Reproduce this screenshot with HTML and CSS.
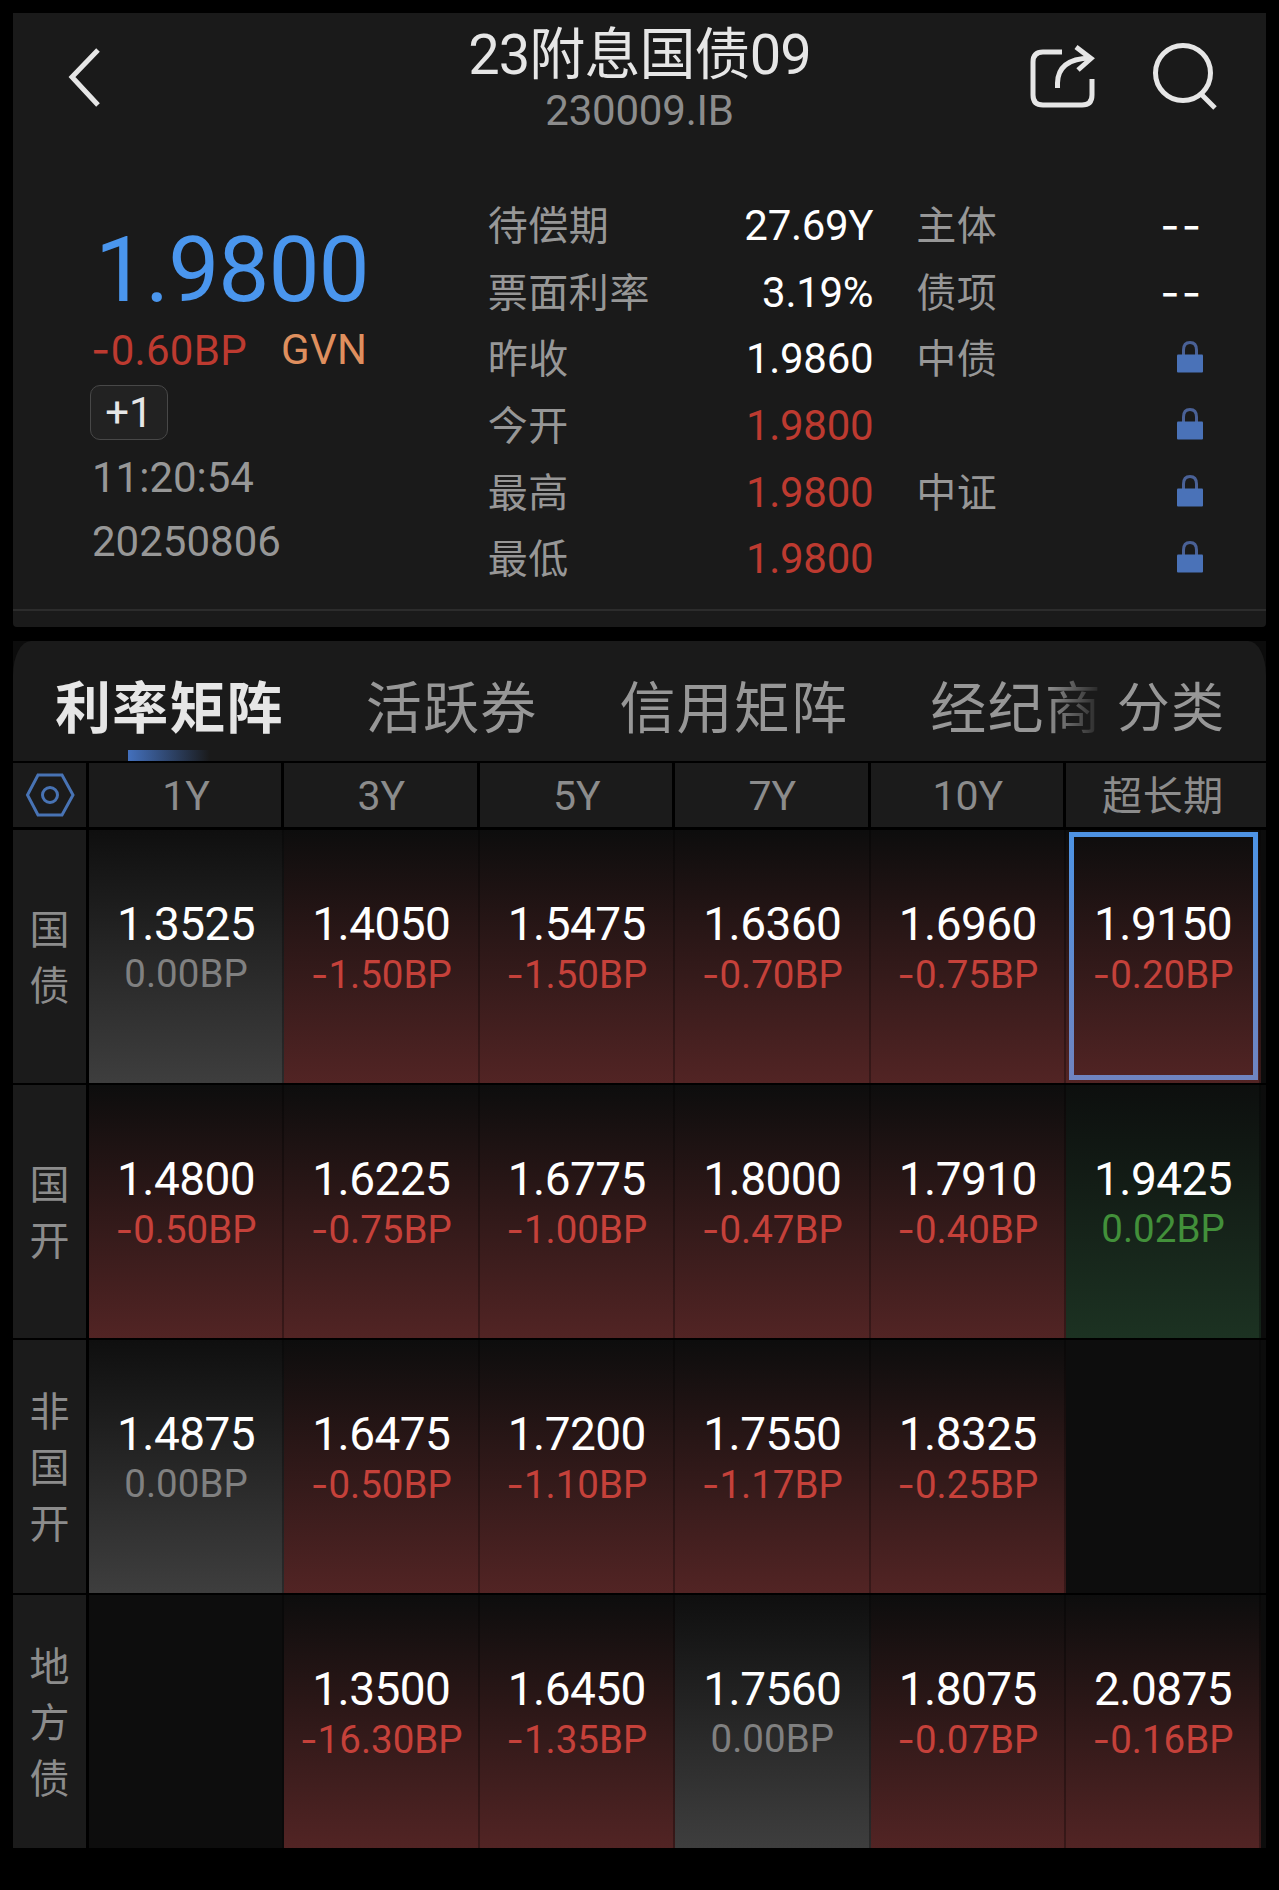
FILE: index.html
```html
<!DOCTYPE html>
<html lang="zh-CN">
<head>
    <meta charset="UTF-8">
    <meta name="viewport" content="width=device-width, initial-scale=1.0">
    <title>23附息国债09</title>
    <link rel="stylesheet" href="styles.css">
</head>
<body>
    <section class="quote">
        <header class="topbar">
            <svg class="back" width="40" height="64" viewBox="0 0 40 64"><path d="M32 5 L6 32 L32 60"/></svg>
            <div class="heading">
                <h1>23附息国债09</h1>
                <p>230009.IB</p>
            </div>
            <div class="actions">
                <svg width="70" height="70" viewBox="0 0 70 70">
                    <path d="M34 10 H15 Q5 10 5 20 V53 Q5 63 15 63 H54 Q64 63 64 53 V37"/>
                    <path d="M29.500 46 V41 Q30 17 62 16"/>
                    <path d="M48 5 L63 16.500 L50 28"/>
                </svg>
                <svg width="70" height="70" viewBox="0 0 70 70">
                    <circle cx="33" cy="31" r="27.500"/>
                    <path d="M51 52 L65 66"/>
                </svg>
            </div>
        </header>

        <div class="summary">
            <div class="price">
                <div class="last">1.9800</div>
                <div class="change"><span class="red"><i>-</i>0.60BP</span><span class="source">GVN</span></div>
                <div class="badge">+1</div>
                <div class="time">11:20:54</div>
                <div class="time">20250806</div>
            </div>
            <dl class="info">
                <dt>待偿期</dt><dd>27.69Y</dd>
                <dt>票面利率</dt><dd>3.19%</dd>
                <dt>昨收</dt><dd>1.9860</dd>
                <dt>今开</dt><dd class="red">1.9800</dd>
                <dt>最高</dt><dd class="red">1.9800</dd>
                <dt>最低</dt><dd class="red">1.9800</dd>
            </dl>
            <dl class="info rating">
                <dt>主体</dt><dd class="none">--</dd>
                <dt>债项</dt><dd class="none">--</dd>
                <dt>中债</dt><dd><svg class="lock" width="26" height="32" viewBox="0 0 26 32"><path d="M6.500 15 V9 Q6.500 1.500 13 1.500 Q19.500 1.500 19.500 9 V15"/><rect y="13.500" width="26" height="18" rx="1"/></svg></dd>
                <dt></dt><dd><svg class="lock" width="26" height="32" viewBox="0 0 26 32"><path d="M6.500 15 V9 Q6.500 1.500 13 1.500 Q19.500 1.500 19.500 9 V15"/><rect y="13.500" width="26" height="18" rx="1"/></svg></dd>
                <dt>中证</dt><dd><svg class="lock" width="26" height="32" viewBox="0 0 26 32"><path d="M6.500 15 V9 Q6.500 1.500 13 1.500 Q19.500 1.500 19.500 9 V15"/><rect y="13.500" width="26" height="18" rx="1"/></svg></dd>
                <dt></dt><dd><svg class="lock" width="26" height="32" viewBox="0 0 26 32"><path d="M6.500 15 V9 Q6.500 1.500 13 1.500 Q19.500 1.500 19.500 9 V15"/><rect y="13.500" width="26" height="18" rx="1"/></svg></dd>
            </dl>
        </div>
    </section>

    <section class="market">
        <nav class="tabs">
            <a class="tab active">利率矩阵</a>
            <a class="tab">活跃券</a>
            <a class="tab">信用矩阵</a>
            <a class="tab fade">经纪商</a>
            <a class="tab more">分类</a>
        </nav>

        <div class="matrix head">
            <div class="label">
                <svg class="settings" width="50" height="44" viewBox="0 0 50 44">
                    <path d="M2.500 22 L13 2 H37 L48 22 L37 42 H13 Z"/>
                    <circle cx="25" cy="22" r="7.500"/>
                </svg>
            </div>
            <div>1Y</div>
            <div>3Y</div>
            <div>5Y</div>
            <div>7Y</div>
            <div>10Y</div>
            <div>超长期</div>
        </div>

        <div class="matrix">
            <div class="label">国<br>债</div>
            <div class="cell flat"><b>1.3525</b><span>0.00BP</span></div>
            <div class="cell down"><b>1.4050</b><span><i>-</i>1.50BP</span></div>
            <div class="cell down"><b>1.5475</b><span><i>-</i>1.50BP</span></div>
            <div class="cell down"><b>1.6360</b><span><i>-</i>0.70BP</span></div>
            <div class="cell down"><b>1.6960</b><span><i>-</i>0.75BP</span></div>
            <div class="cell down selected"><b>1.9150</b><span><i>-</i>0.20BP</span></div>
        </div>

        <div class="matrix">
            <div class="label">国<br>开</div>
            <div class="cell down"><b>1.4800</b><span><i>-</i>0.50BP</span></div>
            <div class="cell down"><b>1.6225</b><span><i>-</i>0.75BP</span></div>
            <div class="cell down"><b>1.6775</b><span><i>-</i>1.00BP</span></div>
            <div class="cell down"><b>1.8000</b><span><i>-</i>0.47BP</span></div>
            <div class="cell down"><b>1.7910</b><span><i>-</i>0.40BP</span></div>
            <div class="cell up"><b>1.9425</b><span>0.02BP</span></div>
        </div>

        <div class="matrix">
            <div class="label">非<br>国<br>开</div>
            <div class="cell flat"><b>1.4875</b><span>0.00BP</span></div>
            <div class="cell down"><b>1.6475</b><span><i>-</i>0.50BP</span></div>
            <div class="cell down"><b>1.7200</b><span><i>-</i>1.10BP</span></div>
            <div class="cell down"><b>1.7550</b><span><i>-</i>1.17BP</span></div>
            <div class="cell down"><b>1.8325</b><span><i>-</i>0.25BP</span></div>
            <div class="cell"></div>
        </div>

        <div class="matrix">
            <div class="label">地<br>方<br>债</div>
            <div class="cell"></div>
            <div class="cell down"><b>1.3500</b><span><i>-</i>16.30BP</span></div>
            <div class="cell down"><b>1.6450</b><span><i>-</i>1.35BP</span></div>
            <div class="cell flat"><b>1.7560</b><span>0.00BP</span></div>
            <div class="cell down"><b>1.8075</b><span><i>-</i>0.07BP</span></div>
            <div class="cell down"><b>2.0875</b><span><i>-</i>0.16BP</span></div>
        </div>
    </section>
</body>
</html>
```

FILE: styles.css
```css
* {
    box-sizing: border-box;
}

body {
    margin: 0;
    padding: 13px 13px 0;
    min-height: 1890px;
    background: #000;
    color: #fff;
    font-family: Roboto, "Noto Sans CJK SC", sans-serif;
    font-size: 42px;
}

h1, p, dl, dd {
    margin: 0;
}

/* wider minus sign than the digit font has */
i {
    font-family: Inter, sans-serif;
    font-style: normal;
}

.red {
    color: #bd3a30;
}

/* quote panel */
.quote {
    height: 614px;
    background: #1a1a1a;
    border-radius: 0 0 4px 4px;
}

.topbar {
    display: grid;
    grid-template-columns: 1fr auto 1fr;
    height: 180px;
    padding: 10px 46px 0 53px;
}

.topbar svg {
    fill: none;
    stroke: #e6e6e6;
    stroke-width: 5;
}

.back {
    margin-top: 22px;
}

.heading {
    margin-left: -7px;
    text-align: center;
}

h1 {
    font-size: 56px;
    font-weight: 400;
    line-height: 64px;
    letter-spacing: -0.9px;
    color: #e6e6e6;
}

.heading p {
    line-height: 48px;
    letter-spacing: -0.2px;
    color: #8c8c8c;
}

.actions {
    display: flex;
    justify-content: flex-end;
    gap: 52px;
    padding-top: 19px;
}

.summary {
    display: flex;
    height: 418px;
    padding: 0 63px 0 77px;
    border-bottom: 2px solid #2c2c2c;
}

.price {
    width: 398px;
    padding-top: 27px;
}

.last {
    padding-left: 5px;
    font-size: 91px;
    line-height: 100px;
    letter-spacing: -1px;
    color: #4a96ee;
}

.change {
    display: flex;
    gap: 34px;
    margin-top: 5px;
    padding-left: 1px;
    line-height: 50px;
    letter-spacing: 0.3px;
}

.source {
    color: #df8f5e;
}

.badge {
    width: 78px;
    height: 55px;
    margin-top: 9px;
    margin-bottom: 6px;
    border: 1px solid #484848;
    border-radius: 10px;
    background: #222;
    color: #e6e6e6;
    line-height: 53px;
    text-align: center;
}

.time {
    padding-left: 2px;
    line-height: 64px;
    color: #979797;
}

.info {
    display: grid;
    grid-template-columns: auto 1fr;
    grid-auto-rows: 66.7px;
    width: 386px;
    line-height: 66px;
}

.info dt {
    padding-top: 1px;
    font-size: 40px;
    letter-spacing: 0.6px;
    color: #979797;
}

.info dd {
    text-align: right;
    letter-spacing: -0.3px;
}

.rating {
    width: 287px;
    margin-left: 43px;
}

.info .none {
    font-family: Inter, sans-serif;
    letter-spacing: 2px;
}

.lock {
    display: block;
    margin: 15px 0 0 auto;
    fill: #4a72b8;
}

.lock path {
    fill: none;
    stroke: #4a6196;
    stroke-width: 3;
}

/* market panel */
.market {
    margin-top: 14px;
    background: #0c0c0c;
}

.tabs {
    display: flex;
    height: 120px;
    padding: 26px 40px 0 42px;
    border-radius: 18px 18px 0 0 / 34px 34px 0 0;
    background: #1a1a1a;
    font-size: 56px;
    line-height: 84px;
    letter-spacing: 1.2px;
    white-space: nowrap;
    color: #979797;
}

.tab {
    margin-right: 82px;
}

.active {
    position: relative;
    font-weight: 700;
    color: #e6e6e6;
}

.active::after {
    content: "";
    position: absolute;
    left: 73px;
    top: 83px;
    width: 82px;
    height: 11px;
    background: linear-gradient(to right, #4370bd, rgba(67, 112, 189, 0));
}

.fade {
    margin-right: 15px;
    color: transparent;
    background: linear-gradient(to right, #979797 66%, #222 100%);
    -webkit-background-clip: text;
    background-clip: text;
}

.more {
    margin-right: 0;
    font-size: 53px;
}

.matrix {
    display: grid;
    grid-template-columns: 76px 195px repeat(4, 195.5px) 1fr;
    height: 255px;
    border-bottom: 2px solid #000;
    text-align: center;
}

.label {
    display: flex;
    align-items: center;
    justify-content: center;
    padding-top: 4px;
    border-right: 3px solid #000;
    background: #1b1b1b;
    color: #8c8c8c;
    font-size: 40px;
    line-height: 56px;
}

.head {
    grid-template-rows: 64px;
    height: 69px;
    border-top: 2px solid #000;
    border-bottom: 3px solid #000;
    line-height: 66px;
    font-size: 41px;
    color: #8c8c8c;
}

.head > div {
    background: #1b1b1b;
    border-right: 3px solid #000;
}

.head > .label {
    padding-top: 0;
}

.head > div:nth-child(n+2):nth-child(-n+6) {
    padding-left: 2px;
}

.head > div:last-child {
    border-right: 0;
    padding-right: 6px;
    font-size: 40px;
    line-height: 68px;
    letter-spacing: 0.6px;
}

.settings {
    fill: none;
    stroke: #4873b4;
    stroke-width: 3;
}

.cell {
    position: relative;
    padding: 69px 0 0 1px;
    border-right: 2px solid rgba(0, 0, 0, 0.3);
    background: #0d0d0d;
    line-height: 50px;
}

.cell:last-child {
    margin-right: 5px;
}

.cell b {
    display: block;
    font-size: 46px;
    font-weight: 400;
    letter-spacing: -0.6px;
}

.cell span {
    display: block;
    font-size: 38.5px;
}

.flat {
    background: linear-gradient(#0f0f0f, #3e3e3e);
}

.flat span {
    color: #808080;
}

.down {
    background: linear-gradient(#0d0d0d, #522424);
}

.down span {
    color: #c5413a;
}

.up {
    background: linear-gradient(#0d0f0e, #1c3222);
}

.up span {
    color: #42903a;
}

.selected::after {
    content: "";
    position: absolute;
    top: 2px;
    right: 1px;
    bottom: 3px;
    left: 3px;
    border: 5px solid;
    border-image: linear-gradient(#4e93e4, #6f84c0) 1;
}
```
